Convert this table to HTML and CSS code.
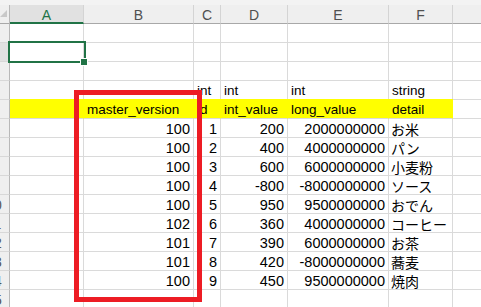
FILE: index.html
```html
<!DOCTYPE html>
<html lang="ja">
<head>
<meta charset="utf-8">
<title>Sheet</title>
<link rel="stylesheet" href="styles.css">
</head>
<body>
<div class="sheet">
  <div class="strip"></div>
  <div class="corner"><svg width="9" height="18" viewBox="0 0 9 18"><polygon points="0,12 7,5 7,12" fill="#c9c9c9"/></svg></div>
  <div class="colhead sel">A</div>
  <div class="colhead">B</div>
  <div class="colhead">C</div>
  <div class="colhead">D</div>
  <div class="colhead">E</div>
  <div class="colhead">F</div>
  <div class="colhead g"></div>

  <div class="rowhead"><span>1</span></div>
  <div class="cell"></div><div class="cell"></div><div class="cell"></div><div class="cell"></div><div class="cell"></div><div class="cell"></div><div class="cell g"></div>

  <div class="rowhead sel"><span>2</span></div>
  <div class="cell"></div><div class="cell"></div><div class="cell"></div><div class="cell"></div><div class="cell"></div><div class="cell"></div><div class="cell g"></div>

  <div class="rowhead"><span>3</span></div>
  <div class="cell"></div><div class="cell"></div><div class="cell"></div><div class="cell"></div><div class="cell"></div><div class="cell"></div><div class="cell g"></div>

  <div class="rowhead"><span>4</span></div>
  <div class="cell"></div><div class="cell"></div><div class="cell">int</div><div class="cell">int</div><div class="cell">int</div><div class="cell">string</div><div class="cell g"></div>

  <div class="rowhead"><span>5</span></div>
  <div class="cell hl"></div><div class="cell hl">master_version</div><div class="cell hl">id</div><div class="cell hl">int_value</div><div class="cell hl">long_value</div><div class="cell hl">detail</div><div class="cell g"></div>

  <div class="rowhead"><span>6</span></div>
  <div class="cell"></div><div class="cell num">100</div><div class="cell num">1</div><div class="cell num">200</div><div class="cell num">2000000000</div><div class="cell jp">お米</div><div class="cell g"></div>

  <div class="rowhead"><span>7</span></div>
  <div class="cell"></div><div class="cell num">100</div><div class="cell num">2</div><div class="cell num">400</div><div class="cell num">4000000000</div><div class="cell jp">パン</div><div class="cell g"></div>

  <div class="rowhead"><span>8</span></div>
  <div class="cell"></div><div class="cell num">100</div><div class="cell num">3</div><div class="cell num">600</div><div class="cell num">6000000000</div><div class="cell jp">小麦粉</div><div class="cell g"></div>

  <div class="rowhead"><span>9</span></div>
  <div class="cell"></div><div class="cell num">100</div><div class="cell num">4</div><div class="cell num">-800</div><div class="cell num">-8000000000</div><div class="cell jp">ソース</div><div class="cell g"></div>

  <div class="rowhead"><span>10</span></div>
  <div class="cell"></div><div class="cell num">100</div><div class="cell num">5</div><div class="cell num">950</div><div class="cell num">9500000000</div><div class="cell jp">おでん</div><div class="cell g"></div>

  <div class="rowhead"><span>11</span></div>
  <div class="cell"></div><div class="cell num">102</div><div class="cell num">6</div><div class="cell num">360</div><div class="cell num">4000000000</div><div class="cell jp">コーヒー</div><div class="cell g"></div>

  <div class="rowhead"><span>12</span></div>
  <div class="cell"></div><div class="cell num">101</div><div class="cell num">7</div><div class="cell num">390</div><div class="cell num">6000000000</div><div class="cell jp">お茶</div><div class="cell g"></div>

  <div class="rowhead"><span>13</span></div>
  <div class="cell"></div><div class="cell num">101</div><div class="cell num">8</div><div class="cell num">420</div><div class="cell num">-8000000000</div><div class="cell jp">蕎麦</div><div class="cell g"></div>

  <div class="rowhead"><span>14</span></div>
  <div class="cell"></div><div class="cell num">100</div><div class="cell num">9</div><div class="cell num">450</div><div class="cell num">9500000000</div><div class="cell jp">焼肉</div><div class="cell g"></div>

  <div class="rowhead"><span>15</span></div>
  <div class="cell"></div><div class="cell"></div><div class="cell"></div><div class="cell"></div><div class="cell"></div><div class="cell"></div><div class="cell g"></div>

  <div class="selection"><div class="handle"></div></div>
  <div class="callout"></div>
</div>
</body>
</html>
```
FILE: styles.css
```css
html, body {
  margin: 0;
  padding: 0;
  background: #ffffff;
  overflow: hidden;
}

.sheet {
  position: relative;
  display: grid;
  grid-template-columns: 10px 74px 110px 27px 67px 101px 64px 1fr;
  grid-template-rows: 5px 19px;
  grid-auto-rows: 19px;
  width: 481px;
  height: 307px;
  overflow: hidden;
  font-family: "Liberation Sans", "Noto Sans CJK JP", sans-serif;
  color: #000;
}

.sheet > div {
  box-sizing: border-box;
  min-width: 0;
}

.strip {
  grid-column: 1 / -1;
  background: #f3f3f3;
}

.corner {
  background: #efefef;
  border-right: 1px solid #b8b8b8;
  border-bottom: 1px solid #a8a8a8;
  overflow: hidden;
}

.corner svg {
  display: block;
}

.colhead {
  background: #efefef;
  border-right: 1px solid #d4d4d4;
  border-bottom: 1px solid #a8a8a8;
  display: flex;
  align-items: flex-end;
  justify-content: center;
  padding-bottom: 1px;
  font-size: 14px;
  line-height: 14px;
  color: #505050;
}

.colhead.sel {
  background: #e1e1e1;
  color: #217346;
  border-bottom: 2px solid #217346;
  padding-bottom: 0;
}

.colhead.g {
  border-right: none;
}

.rowhead {
  background: #efefef;
  border-right: 1px solid #b8b8b8;
  border-bottom: 1px solid #d8d8d8;
  display: flex;
  justify-content: flex-end;
  align-items: flex-end;
  overflow: hidden;
  font-size: 14px;
  line-height: 16px;
  color: #555;
}

.rowhead span {
  flex: 0 0 30px;
  text-align: center;
}

.rowhead.sel {
  background: #e1e1e1;
}

.cell {
  border-right: 1px solid #dadada;
  border-bottom: 1px solid #dadada;
  display: flex;
  align-items: flex-end;
  padding: 0 3px;
  line-height: 16px;
  white-space: nowrap;
  font-size: 13.5px;
}

.cell.num {
  justify-content: flex-end;
  font-size: 14.5px;
}

.cell.jp {
  font-family: "Noto Sans CJK JP", sans-serif;
  font-size: 14px;
  padding-left: 2px;
}

.cell.hl {
  background: #ffff00;
  border-right-color: #ffff00;
  box-shadow: 0 -1px 0 #ffff00;
}

.cell.g {
  border-right: none;
}

.selection {
  position: absolute;
  left: 8px;
  top: 41px;
  width: 78px;
  height: 22px;
  border: 2px solid #217346;
}

.handle {
  position: absolute;
  left: 71px;
  top: 16px;
  width: 6px;
  height: 6px;
  background: #217346;
  outline: 1px solid #ffffff;
}

.callout {
  position: absolute;
  left: 74px;
  top: 90px;
  width: 128px;
  height: 212px;
  border: 5px solid #ed1c24;
}
```
